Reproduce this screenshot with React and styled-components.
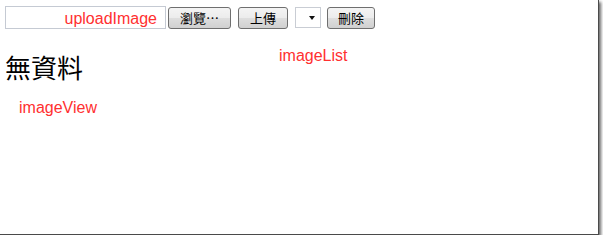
import React from "react";
import styled, { createGlobalStyle } from "styled-components";

const GlobalStyle = createGlobalStyle`
    html, body {
        margin: 0;
        padding: 0;
        background-color: white;
    }
    body {
        font-family: "Liberation Sans", Arial, sans-serif;
    }
`;

const Frame = styled.div`
    width: 598px;
    height: 234px;
    box-sizing: content-box;
    background-color: white;
    border-right: 1px solid #4a4a4a;
    border-bottom: 1px solid #4a4a4a;
    box-shadow: 2px 2px 3px rgba(0, 0, 0, 0.6);
    overflow: hidden;
`;

const Toolbar = styled.div`
    display: flex;
    align-items: center;
    padding: 6px 0 0 5px;
    height: 23px;
`;

const FileBox = styled.div`
    display: flex;
    justify-content: flex-end;
    box-sizing: border-box;
    width: 161px;
    height: 23px;
    padding: 3px 8px 0 0;
    border: 1px solid #c5cad3;
    background-color: white;
`;

const Label = styled.span`
    display: block;
    color: #ff3030;
    font-family: "Liberation Sans", Arial, sans-serif;
    font-size: 16px;
    line-height: 18px;
    white-space: nowrap;
`;

const ListLabel = styled(Label)`
    margin-top: 2px;
`;

const Button = styled.button`
    box-sizing: border-box;
    height: 22px;
    margin-left: ${(p) => p.$gap}px;
    padding: 0 ${(p) => p.$pad}px;
    border: 1px solid #6f6f6f;
    border-radius: 3px;
    background: linear-gradient(#f4f4f4, #ececec 48%, #dedede 52%, #d0d0d0);
    color: #000;
    font-family: "Noto Sans CJK TC", "Noto Sans CJK SC", sans-serif;
    font-size: 13px;
    line-height: 20px;
    cursor: pointer;
`;

const Select = styled.div`
    display: flex;
    align-items: center;
    justify-content: flex-end;
    box-sizing: border-box;
    width: 26px;
    height: 21px;
    margin-left: 7px;
    padding-right: 5px;
    border: 1px solid #c9cdd4;
    background-color: white;
`;

const Arrow = styled.span`
    width: 0;
    height: 0;
    border-left: 3.5px solid transparent;
    border-right: 3.5px solid transparent;
    border-top: 4px solid #111;
`;

const Content = styled.div`
    display: flex;
    align-items: flex-start;
    padding: 16px 0 0 5px;
`;

const Heading = styled.h1`
    margin: 7px 0 0 0;
    width: 274px;
    font-family: "Noto Sans CJK TC", "Noto Sans CJK SC", sans-serif;
    font-size: 26px;
    font-weight: normal;
    line-height: 30px;
    color: #000;
`;

const ViewArea = styled.div`
    padding: 17px 0 0 19px;
`;

export default function App() {
    return (
        <>
            <GlobalStyle />
            <Frame>
                <Toolbar>
                    <FileBox>
                        <Label>uploadImage</Label>
                    </FileBox>
                    <Button $gap={2} $pad={11}>瀏覽…</Button>
                    <Button $gap={7} $pad={11}>上傳</Button>
                    <Select>
                        <Arrow />
                    </Select>
                    <Button $gap={6} $pad={10}>刪除</Button>
                </Toolbar>
                <Content>
                    <Heading>無資料</Heading>
                    <ListLabel>imageList</ListLabel>
                </Content>
                <ViewArea>
                    <Label>imageView</Label>
                </ViewArea>
            </Frame>
        </>
    );
}
